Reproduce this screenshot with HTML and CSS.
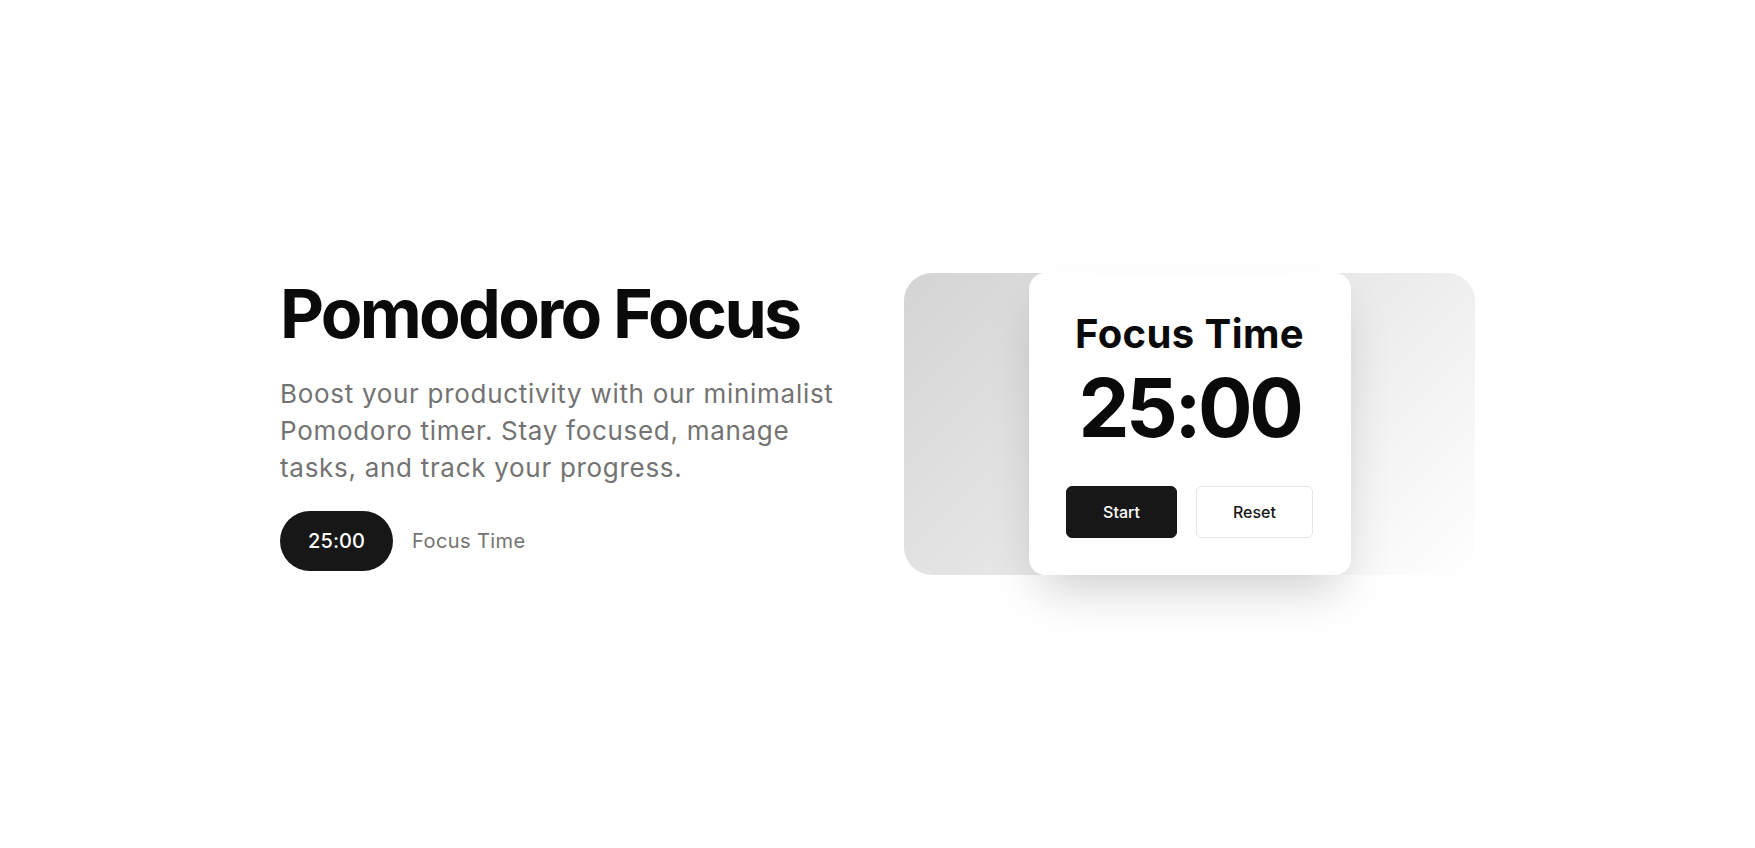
FILE: index.html
```html
<!DOCTYPE html>
<html lang="en">
<head>
<meta charset="utf-8">
<title>Pomodoro Focus</title>
<link rel="stylesheet" href="styles.css">
</head>
<body>
<main class="page">
  <section class="hero">
    <div class="intro">
      <h1 class="title">Pomodoro Focus</h1>
      <p class="lead">Boost your productivity with our minimalist Pomodoro timer. Stay focused, manage tasks, and track your progress.</p>
      <div class="status">
        <span class="pill">25:00</span>
        <span class="status-label">Focus Time</span>
      </div>
    </div>
    <div class="showcase">
      <div class="card">
        <h2 class="card-title">Focus Time</h2>
        <div class="timer">25:00</div>
        <div class="actions">
          <button class="btn btn-primary">Start</button>
          <button class="btn btn-outline">Reset</button>
        </div>
      </div>
    </div>
  </section>
</main>
</body>
</html>
```

FILE: styles.css
```css
* { box-sizing: border-box; }
html, body { margin: 0; padding: 0; }
body {
  font-family: Inter, "Noto Sans", sans-serif;
  background: #ffffff;
  color: #0a0a0a;
}
.page {
  min-height: 848px;
  display: flex;
  align-items: center;
  justify-content: center;
}
.hero {
  width: 1195px;
  display: grid;
  grid-template-columns: 1fr 1fr;
  column-gap: 53px;
  align-items: center;
}
.intro {
  display: flex;
  flex-direction: column;
  align-items: flex-start;
}
.title {
  margin: 0;
  font-size: 68px;
  line-height: 72px;
  font-weight: 700;
  letter-spacing: -0.04em;
  color: #0a0a0a;
}
.lead {
  margin: 26px 0 25px;
  font-size: 26px;
  line-height: 37px;
  letter-spacing: 0.027em;
  color: #737373;
  max-width: 571px;
}
.status {
  display: flex;
  align-items: center;
  gap: 19px;
}
.pill {
  background: #171717;
  color: #ffffff;
  border-radius: 9999px;
  padding: 16px 28px;
  font-size: 20px;
  line-height: 28px;
  font-weight: 500;
  letter-spacing: 0.005em;
}
.status-label {
  font-size: 20px;
  line-height: 28px;
  letter-spacing: 0.02em;
  color: #737373;
}
.showcase {
  border-radius: 28px;
  background: linear-gradient(135deg, #d4d4d4 0%, #e8e8e8 50%, #ffffff 100%);
  display: flex;
  justify-content: center;
}
.card {
  width: 322px;
  height: 302px;
  background: #ffffff;
  border-radius: 16px;
  box-shadow: 0 25px 50px -12px rgba(0, 0, 0, 0.2);
  padding: 39px 0 0;
  display: flex;
  flex-direction: column;
  align-items: center;
}
.card-title {
  margin: 0;
  font-size: 40px;
  line-height: 44px;
  font-weight: 700;
  letter-spacing: 0.01em;
}
.timer {
  margin-top: 12px;
  font-size: 81px;
  line-height: 80px;
  font-weight: 700;
  letter-spacing: -0.042em;
}
.actions {
  margin-top: 38px;
  display: flex;
  gap: 19px;
}
.btn {
  font-family: inherit;
  font-size: 16px;
  line-height: 24px;
  font-weight: 500;
  border-radius: 6px;
  padding: 13px 36px;
  border: 1px solid transparent;
  cursor: pointer;
}
.btn-primary {
  background: #171717;
  border-color: #171717;
  color: #ffffff;
}
.btn-outline {
  background: #ffffff;
  border-color: #e5e5e5;
  color: #171717;
}
```
